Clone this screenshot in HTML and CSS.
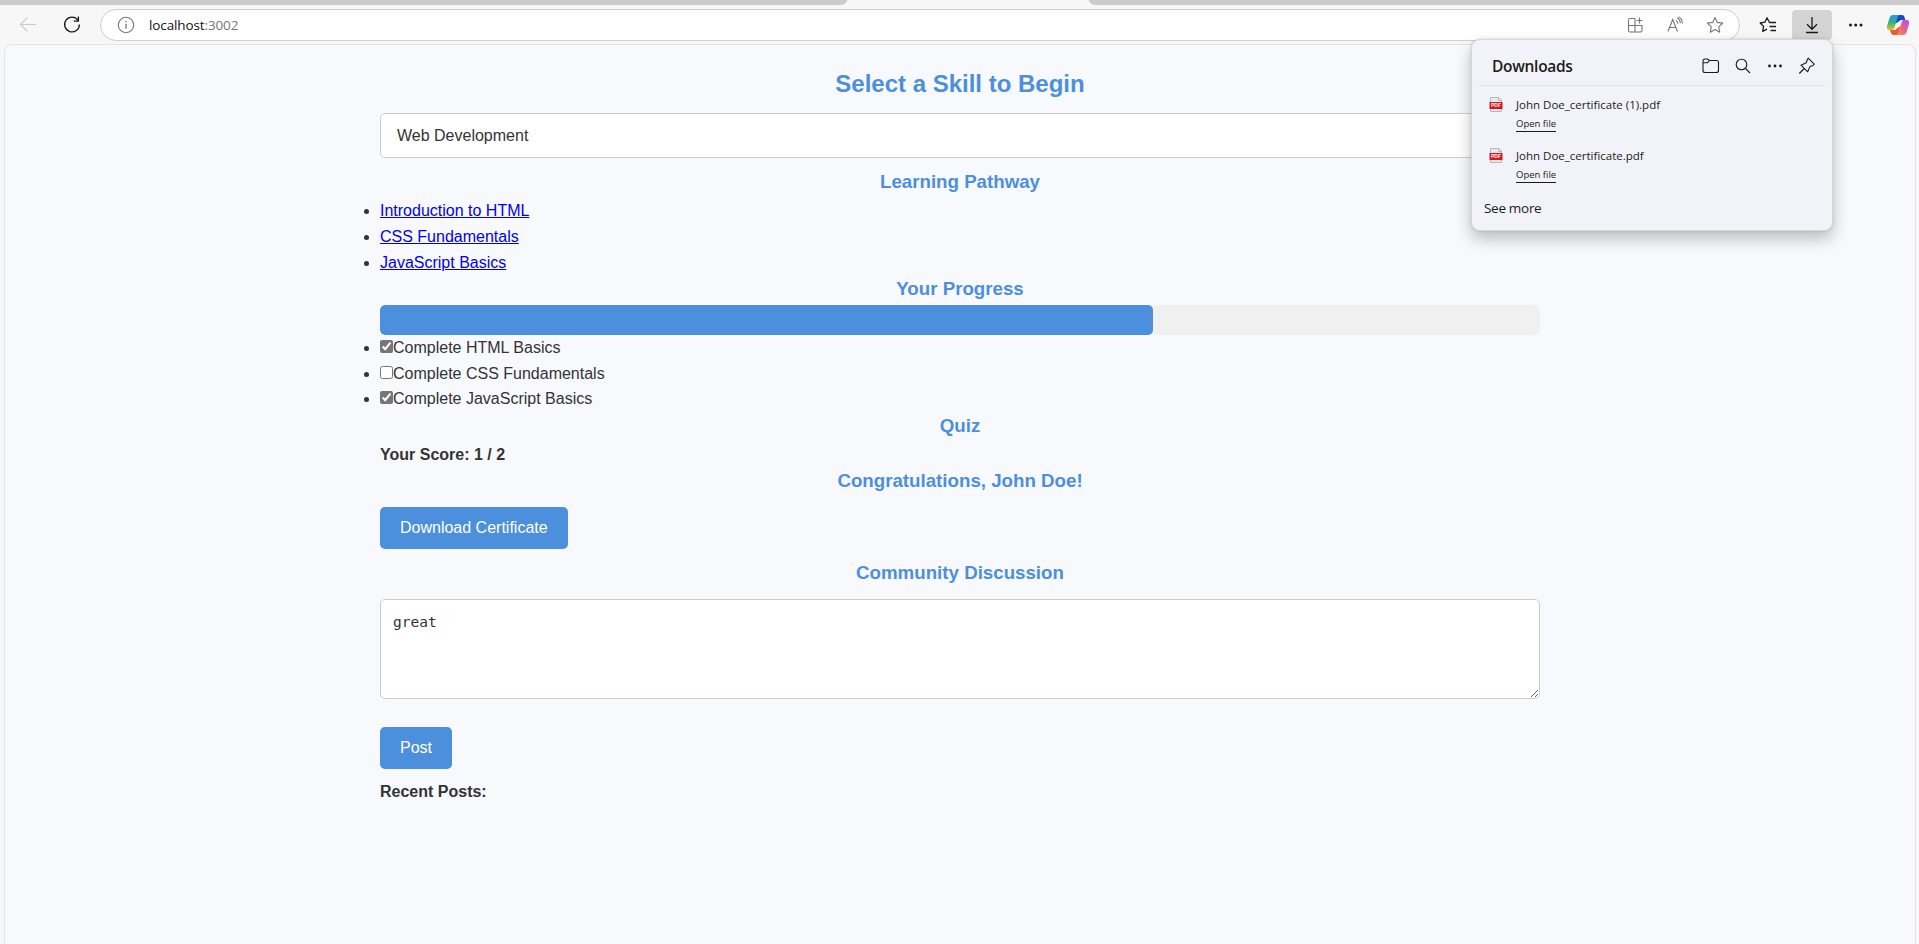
FILE: index.html
```html
<!DOCTYPE html>
<html lang="en">
<head>
<meta charset="utf-8">
<title>Skill Learning</title>
<link rel="stylesheet" href="styles.css">
</head>
<body>
<div class="window">
  <div class="tabstrip"><div class="tabs-left"></div><div class="tabs-right"></div></div>
  <header class="toolbar">
    <svg class="nav-back" width="20" height="20" viewBox="0 0 20 20" fill="none" stroke="#cbcbcb" stroke-width="1.1"><path d="M18 9.5H2.5M9.5 2.5l-7 7 7 7"/></svg>
    <svg class="nav-reload" width="20" height="20" viewBox="0 0 20 20" fill="none" stroke="#1b1b1b" stroke-width="1.3"><path d="M16 5.2A7.4 7.4 0 1 0 17.4 9.5M16.4 1.6v4.6h-4.6"/></svg>
    <div class="address">
      <svg width="18" height="18" viewBox="0 0 18 18" fill="none" stroke="#777" stroke-width="1.1"><circle cx="9" cy="9" r="7.7"/><path d="M9 7.8v5M9 4.8v1.4" stroke-width="1.3"/></svg>
      <span class="url">localhost<span class="port">:3002</span></span>
      <div class="address-actions">
        <svg width="18" height="18" viewBox="0 0 18 18" fill="none" stroke="#767676" stroke-width="1.1"><path d="M9 2.500H4A1.500 1.500 0 0 0 2.500 4v10.500A1.500 1.500 0 0 0 4 16h10.500a1.500 1.500 0 0 0 1.500-1.500V9.500H2.500M9 2.500V16M13.500 1.500v6M10.500 4.500h6"/></svg>
        <svg width="18" height="18" viewBox="0 0 18 18" fill="none" stroke="#767676" stroke-width="1.100"><path d="M2 15.500L6.700 3.500 11.500 15.500M3.700 11.500h6.200M10 4.300c1.300.9 1.800 2 1.800 3.500M11 1.800c2.200 1.200 3.300 3 3.300 5.500M12.500.6c2.500 1.500 3.900 4 3.900 7"/></svg>
        <svg width="18" height="18" viewBox="0 0 18 18" fill="none" stroke="#767676" stroke-width="1.100" stroke-linejoin="round"><path d="M9 1.500l2.300 4.900 5.400.7-4 3.700 1 5.400L9 13.600l-4.700 2.600 1-5.400-4-3.700 5.400-.7z"/></svg>
      </div>
    </div>
    <svg class="favorites" width="18" height="18" viewBox="0 0 18 18" fill="none" stroke="#1b1b1b" stroke-width="1.300" stroke-linejoin="round"><path d="M15 6.500h-4.500L8 1.800 5.900 6.200 1.200 7l3.400 3.400-.9 4.900L8 13.200M11.500 6.500H17M10.500 10.500H17M11.500 14.500H17"/></svg>
    <div class="download-button">
      <svg width="16" height="18" viewBox="0 0 16 18" fill="none" stroke="#1b1b1b" stroke-width="1.300"><path d="M8 1v12M3 8.300l5 5 5-5M2 16.500h12"/></svg>
    </div>
    <svg class="more" width="16" height="4" viewBox="0 0 16 4" fill="#1b1b1b"><circle cx="2.500" cy="2" r="1.500"/><circle cx="7.700" cy="2" r="1.500"/><circle cx="13" cy="2" r="1.500"/></svg>
    <svg class="copilot" width="24" height="22" viewBox="0 0 24 22">
      <defs>
        <linearGradient id="cool" x1="0" y1="0" x2="0" y2="1"><stop offset="0" stop-color="#1b9fea"/><stop offset=".5" stop-color="#38ad83"/><stop offset="1" stop-color="#e5c51c"/></linearGradient>
        <linearGradient id="warm" x1="1" y1="0" x2="0" y2="1"><stop offset="0" stop-color="#a657ed"/><stop offset=".5" stop-color="#ef5c88"/><stop offset="1" stop-color="#ff9b3b"/></linearGradient>
      </defs>
      <path d="M10 1h6c1.600 0 2 .8 2.500 2.300L19.300 6H15L9 10z" fill="#1748c5"/>
      <path d="M13 21H7.500c-1.500 0-2.200-.8-2.700-2.400L4 16h5l5-4z" fill="#f05a35"/>
      <path d="M7 1h7c-1.400 0-2 1-2.500 2.500L8.300 14c-.5 1.500-1 2-2.500 2H3.500C.8 16 .6 13.700 1.200 11.500L3.500 4C4.200 2 5.300 1 7 1z" fill="url(#cool)"/>
      <path d="M17 21h-7c1.400 0 2-1 2.500-2.500L15.700 8c.5-1.500 1-2 2.500-2h2.300c2.700 0 2.900 2.300 2.300 4.500L20.500 18c-.7 2-1.800 3-3.500 3z" fill="url(#warm)"/>
    </svg>
  </header>

  <main class="page">
    <div class="container">
      <h2 class="title">Select a Skill to Begin</h2>
      <select class="skill-select"><option>Web Development</option></select>
      <h3 class="heading">Learning Pathway</h3>
      <ul class="list">
        <li><a href="#">Introduction to HTML</a></li>
        <li><a href="#">CSS Fundamentals</a></li>
        <li><a href="#">JavaScript Basics</a></li>
      </ul>
      <h3 class="heading">Your Progress</h3>
      <div class="progress"><div class="progress-fill" style="width:66.6667%"></div></div>
      <ul class="list">
        <li><input class="check" type="checkbox" checked>Complete HTML Basics</li>
        <li><input class="check" type="checkbox">Complete CSS Fundamentals</li>
        <li><input class="check" type="checkbox" checked>Complete JavaScript Basics</li>
      </ul>
      <h3 class="heading">Quiz</h3>
      <h4 class="subheading">Your Score: 1 / 2</h4>
      <h3 class="heading">Congratulations, John Doe!</h3>
      <button class="button">Download Certificate</button>
      <h3 class="heading">Community Discussion</h3>
      <textarea class="post-text" spellcheck="false">great</textarea>
      <button class="button">Post</button>
      <h4 class="subheading">Recent Posts:</h4>
    </div>
  </main>

  <aside class="downloads">
    <div class="downloads-head">
      <span class="downloads-title">Downloads</span>
      <div class="downloads-tools">
        <svg width="18" height="16" viewBox="0 0 18 16" fill="none" stroke="#1b1b1b" stroke-width="1.100"><path d="M1 4V3a2 2 0 0 1 2-2h2.500L7.500 2.500h7a2 2 0 0 1 2 2v8a2 2 0 0 1-2 2H3a2 2 0 0 1-2-2zM1 4.700h4.500L7.500 2.500"/></svg>
        <svg width="16" height="16" viewBox="0 0 16 16" fill="none" stroke="#1b1b1b" stroke-width="1.100"><circle cx="6.500" cy="6.500" r="5.300"/><path d="M10.500 10.500l4.500 4.500"/></svg>
        <svg width="16" height="4" viewBox="0 0 16 4" fill="#1b1b1b"><circle cx="2.500" cy="2" r="1.400"/><circle cx="8" cy="2" r="1.400"/><circle cx="13.500" cy="2" r="1.400"/></svg>
        <svg width="18" height="18" viewBox="0 0 18 18" fill="none" stroke="#1b1b1b" stroke-width="1.100" stroke-linejoin="round"><path d="M10.200 1.200l6 6-1.200 1.200-3 1-2.300 5.400L3 8.200l5.200-2.500 1.200-3.200zM6.300 11.500L1.300 16.500"/></svg>
      </div>
    </div>
    <div class="file">
      <svg width="14" height="15" viewBox="0 0 14 15"><path d="M1.500.5h8.500l2.500 2.500v11.500h-11z" fill="#e9ebe9" stroke="#b4bab6"/><path d="M9.500.5v3h3" fill="none" stroke="#b4bab6"/><path d="M.5 5h13v7H.5z" fill="#e0101f"/><text class="pdf-label" x="2" y="10.400" textLength="10" lengthAdjust="spacingAndGlyphs">PDF</text></svg>
      <div class="file-info"><span class="file-name">John Doe_certificate (1).pdf</span><span class="file-open">Open file</span></div>
    </div>
    <div class="file">
      <svg width="14" height="15" viewBox="0 0 14 15"><path d="M1.500.5h8.500l2.500 2.500v11.500h-11z" fill="#e9ebe9" stroke="#b4bab6"/><path d="M9.500.5v3h3" fill="none" stroke="#b4bab6"/><path d="M.5 5h13v7H.5z" fill="#e0101f"/><text class="pdf-label" x="2" y="10.400" textLength="10" lengthAdjust="spacingAndGlyphs">PDF</text></svg>
      <div class="file-info"><span class="file-name">John Doe_certificate.pdf</span><span class="file-open">Open file</span></div>
    </div>
    <span class="see-more">See more</span>
  </aside>
</div>
</body>
</html>
```
FILE: styles.css
```css
* { box-sizing: border-box; margin: 0; padding: 0; }
html, body { height: 100%; overflow: hidden; }
body { font-family: "Liberation Sans", Arial, sans-serif; font-size: 16px; line-height: 1.6; color: #333; background: #f7f7f7; }
.window { position: relative; height: 944px; display: flex; flex-direction: column; }
.tabstrip { height: 5px; flex: none; display: flex; justify-content: space-between; }
.tabs-left { width: 847px; background: #cbcbcb; border-bottom-right-radius: 6px 5px; }
.tabs-right { width: 830px; background: #cbcbcb; border-bottom-left-radius: 6px 5px; }
.toolbar { height: 39px; flex: none; display: flex; align-items: center; padding: 0 9px 0 18px; font-family: "Open Sans", "Noto Sans", sans-serif; }
.nav-reload { margin-left: 24px; }
.address { width: 1640px; height: 32px; margin-left: 18px; border: 1px solid #cfcfcf; border-radius: 16px; background: #fff; display: flex; align-items: center; padding: 0 15px 0 16px; }
.url { margin-left: 14px; font-size: 13.500px; letter-spacing: -0.120px; line-height: 20px; color: #111; }
.port { color: #777; }
.address-actions { margin-left: auto; display: flex; gap: 22px; }
.favorites { margin-left: 19px; }
.download-button { width: 40px; height: 30px; margin-left: 15px; border-radius: 4px; background: #d4d4d4; display: flex; align-items: center; justify-content: center; }
.more { margin-left: 16px; }
.copilot { margin-left: auto; }

.page { flex: 1; margin: 0 3px 0 4px; border: 1px solid #e4e4e6; border-bottom: 0; border-radius: 8px 8px 0 0; background: #f8f9fd; }
.container { width: 1200px; margin: 0 auto; padding: 20px; }
.title, .heading { color: #4c8fdd; text-align: center; font-weight: bold; }
.title { font-size: 24px; }
.heading { font-size: 18.720px; line-height: 28.950px; padding-bottom: 1px; }
.subheading { font-size: 16px; }
.skill-select { display: block; appearance: none; width: 100%; height: 45px; margin: 10px 0; padding: 0 16px; border: 1px solid #ccc; border-radius: 5px; background: #fff; color: #333; font: 16px "Liberation Sans", Arial, sans-serif; }
.list a { color: #0000ee; }
.check { width: 13px; height: 13px; accent-color: #767676; }
.progress { height: 30px; background: #f0f0f0; border-radius: 5px; overflow: hidden; }
.progress-fill { height: 30px; background: #4c8fdd; border-radius: 5px; }
.button { display: block; margin: 10px 0; padding: 12px 20px; border: 0; border-radius: 5px; background: #4c8fdd; color: #fff; font: 16px/18px "Liberation Sans", Arial, sans-serif; }
.post-text { display: block; width: 100%; height: 100px; margin: 10px 0 28px; padding: 14px 12px 12px; border: 1px solid #ccc; border-radius: 5px; background: #fff; color: #333; font: 14.500px "DejaVu Sans Mono", monospace; }

.downloads { position: absolute; left: 1471px; top: 39px; width: 362px; height: 192px; padding: 0 6px; border: 1px solid #d8d8da; border-radius: 9px; background: #f2f3f8; box-shadow: 0 8px 16px rgba(0,0,0,.24), 0 0 3px rgba(0,0,0,.14); color: #1b1b1b; font-family: "Open Sans", "Noto Sans", sans-serif; }
.downloads-head { height: 46px; border-bottom: 1px solid #e1e2e5; padding: 7px 10px 0 14px; display: flex; align-items: center; justify-content: space-between; }
.downloads-title { font-size: 15.500px; line-height: 22px; font-weight: 600; letter-spacing: -.3px; }
.downloads-tools { display: flex; align-items: center; gap: 15.500px; margin-top: -1px; }
.file { display: flex; height: 51px; padding: 11px 0 0 10.500px; gap: 13.500px; }
.file-info { display: flex; flex-direction: column; align-items: flex-start; }
.file-name { font-size: 11.500px; line-height: 16px; }
.file-open { margin-top: 4px; border-bottom: 1px solid #1b1b1b; font-size: 9.500px; line-height: 14px; }
.pdf-label { fill: #fff; font: bold 5px "Liberation Sans", sans-serif; }
.see-more { display: block; padding: 10px 0 0 6px; font-size: 13.500px; line-height: 20px; letter-spacing: -.3px; }
```
